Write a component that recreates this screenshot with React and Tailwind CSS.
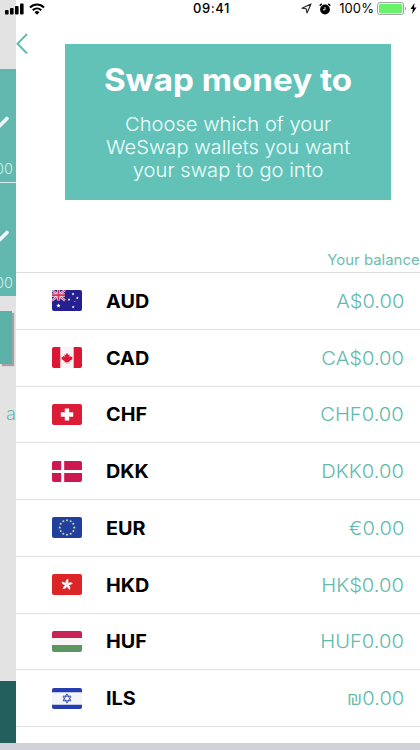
import React from "react";

function Flag({ code }) {
  const star = (x, y, r, fill) => {
    const pts = [];
    for (let i = 0; i < 10; i++) {
      const a = (i * Math.PI) / 5 - Math.PI / 2;
      const k = i % 2 ? r * 0.45 : r;
      pts.push(`${x + Math.cos(a) * k},${y + Math.sin(a) * k}`);
    }
    return <polygon key={`${x}-${y}`} points={pts.join(" ")} fill={fill} />;
  };
  const art = {
    AUD: (
      <>
        <rect width="30" height="21" fill="#25208f" />
        <path d="M0 0 13 10.5M13 0 0 10.5" stroke="#e9dcea" strokeWidth="2.4" />
        <path d="M0 0 13 10.5M13 0 0 10.5" stroke="#d73c60" strokeWidth="1" />
        <path d="M6.5 0V10.5M0 5.2H13" stroke="#f2dfe9" strokeWidth="3.2" />
        <path d="M6.5 0V10.5M0 5.2H13" stroke="#dc3157" strokeWidth="1.8" />
        {star(6.5, 15.7, 2.3, "#fff")}
        {star(21, 4, 1.6, "#fff")}
        {star(17, 9.6, 1.5, "#fff")}
        {star(25.3, 8, 1.5, "#fff")}
        {star(21.2, 17, 1.6, "#fff")}
        {star(22.9, 11.5, 0.8, "#fff")}
      </>
    ),
    CAD: (
      <>
        <rect width="30" height="21" fill="#f8f5f5" />
        <path d="M0 0H8.3V21H0ZM21.7 0H30V21H21.7Z" fill="#dc1734" />
        <path d="m15 5.7 1.3 2.2 1.3-.6-.4 2.8 1.5-1.2.5 1 1.5-.1-.7 1.7.7.5-3.4 2.3.2 1.1-2.2-.3V17h-.6v-1.9l-2.2.3.2-1.1-3.4-2.3.7-.5-.7-1.7 1.5.1.5-1 1.5 1.2-.4-2.8 1.3.6Z" fill="#dc1734" />
      </>
    ),
    CHF: (
      <>
        <rect width="30" height="21" fill="#dc1b36" />
        <path d="M12.8 4.5h4.4v3.8h4v4.4h-4v3.8h-4.4v-3.8h-4V8.3h4Z" fill="#fff" />
      </>
    ),
    DKK: (
      <>
        <rect width="30" height="21" fill="#cd1750" />
        <path d="M10.7 0V21M0 10.5H30" stroke="#fff" strokeWidth="3" />
      </>
    ),
    EUR: (
      <>
        <rect width="30" height="21" fill="#21409d" />
        {Array.from({ length: 12 }, (_, i) =>
          star(15 + 7.3 * Math.cos((i * Math.PI) / 6), 10.5 + 7.3 * Math.sin((i * Math.PI) / 6), 1.5, "#dedc98")
        )}
      </>
    ),
    HKD: (
      <>
        <rect width="30" height="21" fill="#dc2527" />
        {[0, 72, 144, 216, 288].map((a) => (
          <path key={a} d="M15 10.5C12.3 8.5 12.8 5.2 15.8 4.5 14.7 6 17.3 7.3 15 10.5Z" fill="#fff" transform={`rotate(${a + 8} 15 10.5)`} />
        ))}
      </>
    ),
    HUF: (
      <>
        <rect width="30" height="21" fill="#f7f5f6" />
        <rect width="30" height="7" fill="#c72455" />
        <rect y="14" width="30" height="7" fill="#5b9561" />
      </>
    ),
    ILS: (
      <>
        <rect width="30" height="21" fill="#f4f5fa" />
        <path d="M0 0H30V4.2H0ZM0 16.8H30V21H0Z" fill="#263daf" />
        <path d="M15 5.900 19 12.800H11ZM15 15.100 11 8.200H19Z" fill="none" stroke="#4056b5" strokeWidth="1" />
      </>
    ),
  };
  return (
    <svg viewBox="0 0 30 21" className="h-[21px] w-[30px] shrink-0 rounded-[2px]">
      {art[code]}
    </svg>
  );
}

const wallets = [
  ["AUD", "A$0.00"],
  ["CAD", "CA$0.00"],
  ["CHF", "CHF0.00"],
  ["DKK", "DKK0.00"],
  ["EUR", "€0.00"],
  ["HKD", "HK$0.00"],
  ["HUF", "HUF0.00"],
  ["ILS", "₪0.00"],
];

function StatusBar() {
  return (
    <div className="absolute inset-x-0 top-0 flex h-[17px] items-center justify-between pl-[5px] pr-[3px] text-black">
      <div className="flex items-center gap-[5px]">
        <svg viewBox="0 0 19 12" className="h-3 w-[19px]">
          <rect x="0" y="7" width="3.6" height="4.5" rx="1" />
          <rect x="5" y="5" width="3.6" height="6.5" rx="1" />
          <rect x="10" y="3" width="3.6" height="8.5" rx="1" />
          <rect x="15" y="0.5" width="3.6" height="11" rx="1" />
        </svg>
        <svg viewBox="0 0 16 12" className="h-3 w-4" fill="none" stroke="#000" strokeWidth="2">
          <path d="M1 4.500C5 .5 11 .5 15 4.500M3.700 7.200C6.200 4.800 9.800 4.800 12.300 7.200" />
          <path d="M5.500 9.200Q8 7 10.500 9.200L8 11.700Z" fill="#000" stroke="none" />
        </svg>
      </div>
      <div className="absolute inset-x-0 pl-[3px] text-center text-[13px] font-medium leading-[17px] tracking-[0.6px]">09:41</div>
      <div className="flex items-center">
        <svg viewBox="0 0 11 11" className="mr-[7px] h-[11px] w-[11px]" fill="none" stroke="#222" strokeWidth="1.1" strokeLinejoin="round">
          <path d="M10 1 1 5.2 5.200 5.800 6 10Z" />
        </svg>
        <svg viewBox="0 0 12 12" className="mr-2 h-3 w-3">
          <circle cx="6" cy="6.5" r="4.9" />
          <path d="M.7 2.700 2.700 .9M11.300 2.700 9.300 .9" stroke="#000" strokeWidth="1.500" />
          <path d="M6 4V6.800H4" fill="none" stroke="#fff" strokeWidth=".9" />
        </svg>
        <span className="mr-[3px] text-[13px] leading-[17px] tracking-[0.1px]">100%</span>
        <svg viewBox="0 0 30 13" className="h-[13px] w-[30px]">
          <rect x=".6" y=".6" width="26" height="11.8" rx="2.2" fill="#fff" stroke="#999" strokeWidth="1" />
          <rect x="2" y="2" width="23.2" height="9" rx="1" fill="#68f36a" />
          <path d="M28 4.500Q30 6.500 28 8.500Z" fill="#999" />
        </svg>
        <svg viewBox="0 0 7 11" className="ml-[3px] h-[11px] w-[7px]">
          <path d="M4.500 0 .5 6H3L2 11 6.500 4.500H4Z" />
        </svg>
      </div>
    </div>
  );
}

function SelectedTile() {
  return (
    <div className="flex h-[113px] shrink-0 flex-col items-end overflow-hidden bg-[#62b8ae]">
      <svg viewBox="0 0 16 16" className="mt-[46px] h-4 w-4 shrink-0" fill="none" stroke="#eef5fb" strokeWidth="3.6" strokeLinecap="round">
        <path d="M-4 8 -1 11.500 7 3.500" />
      </svg>
      <span className="mr-[3px] mt-[29px] text-[14.5px] font-light leading-[18px] text-[#d2ecea]">00</span>
    </div>
  );
}

export default function App() {
  return (
    <div className="relative flex h-[750px] w-[420px] flex-col overflow-hidden bg-white font-['Inter',sans-serif]">
      <div className="flex h-[743px]">
        <aside className="flex w-4 shrink-0 flex-col overflow-hidden bg-[#e4e3e4] pt-[69px]">
          <SelectedTile />
          <div className="h-px shrink-0 bg-[#d4efed]" />
          <SelectedTile />
          <div className="mt-[15px] h-[53px] w-3 shrink-0 bg-[#5bb1a7] shadow-[2px_2px_1px_#a5a1a0]" />
          <span className="mt-[38px] self-end text-[18px] font-light leading-6 text-[#62b8ae]">a</span>
          <div className="mt-auto h-[62px] shrink-0 bg-[#235f5c]" />
        </aside>
        <main className="flex w-[404px] flex-col overflow-hidden">
          <div className="flex h-[200px] shrink-0">
            <svg viewBox="0 0 12 22" className="mt-[33px] h-[22px] w-3" fill="none" stroke="#62bdb3" strokeWidth="2">
              <path d="M11 1 1.500 10.700 11 20.500" />
            </svg>
            <div className="ml-[37px] mt-11 flex h-[156px] w-[326px] flex-col items-center bg-[#62c2b8] text-white">
              <h1 className="mt-[17px] scale-x-[1.07] whitespace-nowrap text-[31px] font-bold leading-[38px]">Swap money to</h1>
              <p className="mt-[14px] scale-x-[1.06] whitespace-nowrap text-center text-[19px] font-light leading-[23.2px] text-[#effffd]">
                Choose which of your
                <br />
                WeSwap wallets you want
                <br />
                your swap to go into
              </p>
            </div>
          </div>
          <div className="flex h-[72px] shrink-0 items-end justify-end pb-[2px]">
            <span className="origin-right scale-x-[1.03] text-[14.5px] leading-5 text-[#6fbdb0]">Your balance</span>
          </div>
          <ul className="border-t border-[#dcdcdc]">
            {wallets.map(([code, balance]) => (
              <li key={code} className="flex h-[56.75px] items-center border-b border-[#e2e2e2] pl-9 pr-4">
                <Flag code={code} />
                <span className="ml-6 origin-left scale-x-[1.07] text-[18.5px] font-bold leading-6 text-black">{code}</span>
                <span className="ml-auto origin-right scale-x-[1.06] pt-[2px] text-[19px] font-light leading-6 text-[#62baac]">{balance}</span>
              </li>
            ))}
          </ul>
        </main>
      </div>
      <div className="h-[7px] bg-[#d1d2d9]" />
      <StatusBar />
    </div>
  );
}
